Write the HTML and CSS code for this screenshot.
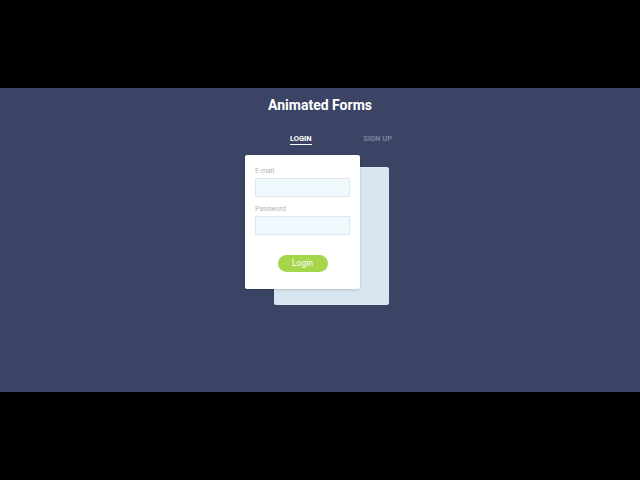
FILE: index.html
```html
<!DOCTYPE html>
<html>
<head>
<meta charset="utf-8">
<link rel="stylesheet" href="styles.css">
</head>
<body>
<div class="stage">
  <h1 class="title">Animated Forms</h1>
  <div class="tabs">
    <span class="tab active">Login</span>
    <span class="tab">Sign up</span>
  </div>
  <div class="stack">
    <div class="card-back"></div>
    <form class="card">
      <label class="label">E-mail</label>
      <div class="input"></div>
      <label class="label second">Password</label>
      <div class="input"></div>
      <div class="btn-row"><span class="btn">Login</span></div>
    </form>
  </div>
</div>
</body>
</html>
```
FILE: styles.css
```css
html, body {
  margin: 0;
  padding: 0;
  background: #000;
  width: 640px;
  height: 480px;
  overflow: hidden;
  font-family: Roboto, "Liberation Sans", sans-serif;
}
.stage {
  margin-top: 88px;
  height: 304px;
  background: #3c4465;
  display: flex;
  flex-direction: column;
  align-items: center;
}
.title {
  margin: 9px 0 0;
  font-size: 14px;
  line-height: 16px;
  font-weight: 700;
  color: #fff;
}
.tabs {
  margin-top: 21px;
  display: flex;
  width: 102px;
  justify-content: space-between;
  margin-left: 42px;
}
.tab {
  font-size: 7.5px;
  line-height: 10px;
  text-transform: uppercase;
  color: #858ca4;
  font-weight: 500;
  padding-bottom: 1px;
}
.tab.active {
  color: #fff;
  font-weight: 700;
  border-bottom: 1.5px solid #fff;
  padding-bottom: 0;
}
.stack {
  position: relative;
  margin-top: 10px;
  width: 144px;
  margin-left: -6px;
  height: 150px;
}
.card-back {
  position: absolute;
  left: 29px;
  top: 12px;
  width: 115px;
  height: 138px;
  background: #d8e6f2;
  border-radius: 2px;
}
.card {
  position: relative;
  width: 115px;
  box-sizing: border-box;
  padding: 11px 10px 17px;
  background: #fff;
  border-radius: 2px;
  display: flex;
  flex-direction: column;
  margin: 0;
  box-shadow: 0 1px 3px rgba(0,0,0,0.15);
}
.label {
  font-size: 7px;
  line-height: 11px;
  color: #b0b4b9;
  margin-bottom: 1px;
}
.label.second {
  margin-top: 7px;
}
.input {
  height: 19px;
  box-sizing: border-box;
  background: #eef8fd;
  border: 1px solid #dde9ef;
}
.btn-row {
  margin-top: 20px;
  display: flex;
  justify-content: center;
}
.btn {
  width: 50px;
  height: 17px;
  border-radius: 9px;
  background: #a5d74b;
  color: #fff;
  font-size: 8.5px;
  line-height: 17px;
  text-align: center;
}
```
